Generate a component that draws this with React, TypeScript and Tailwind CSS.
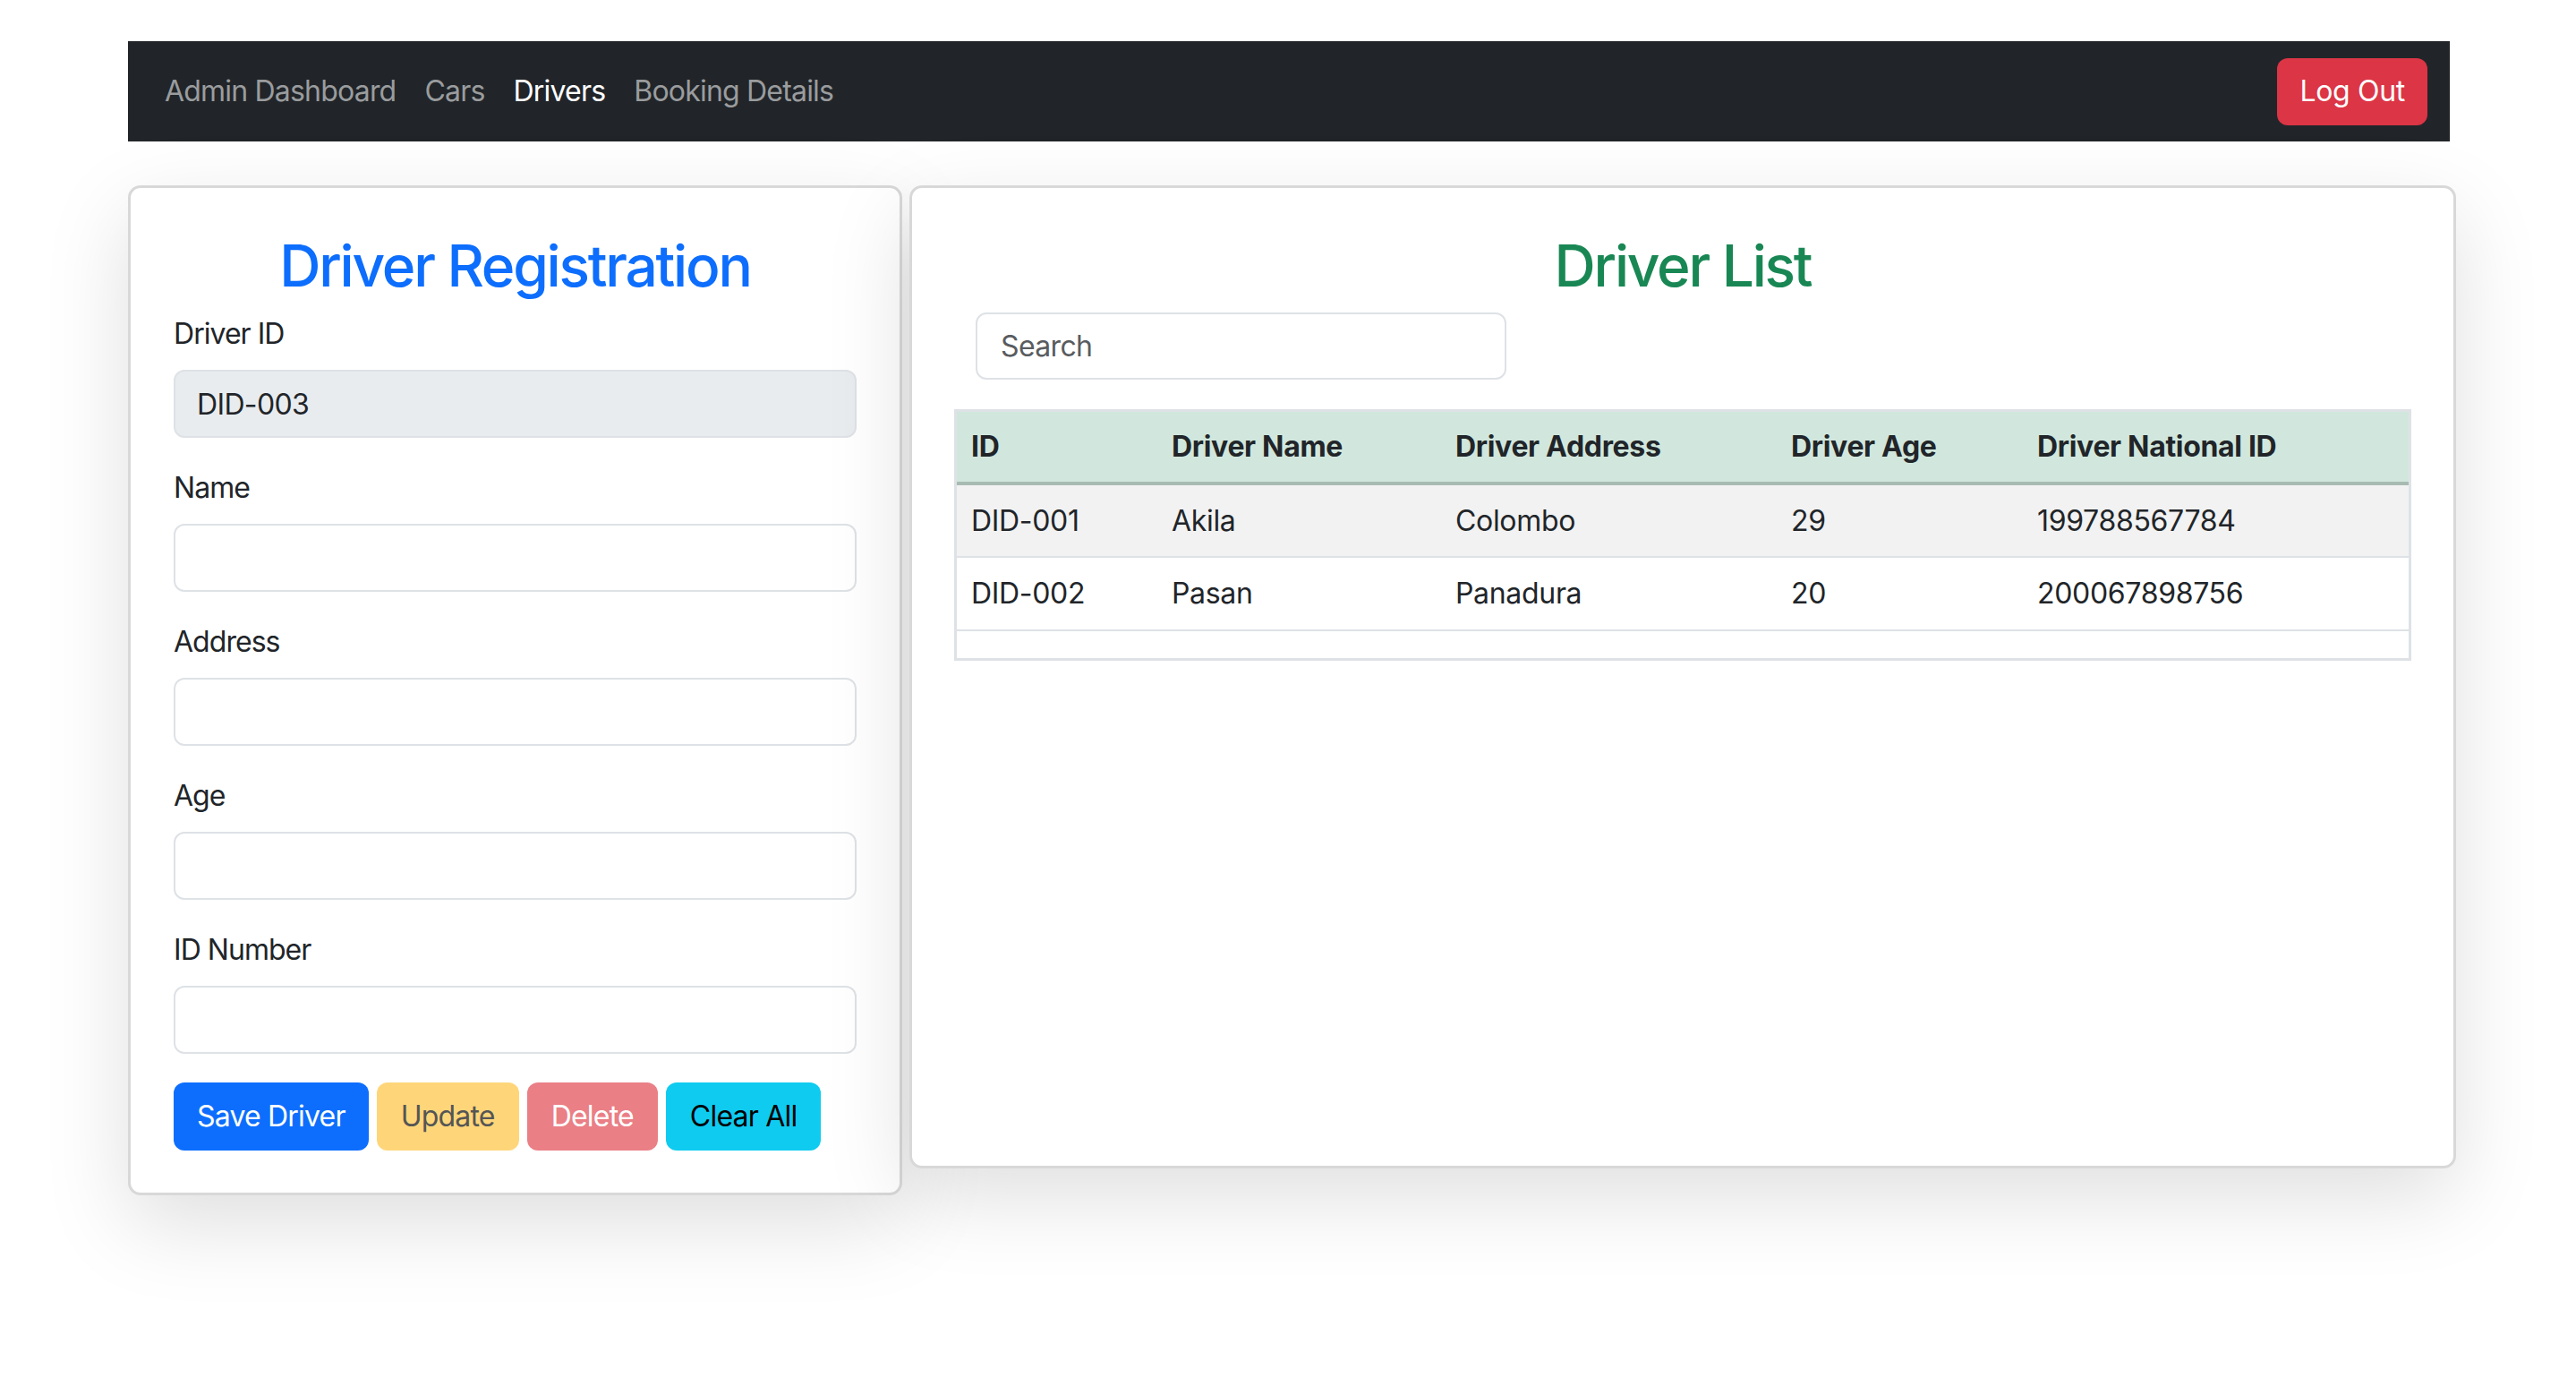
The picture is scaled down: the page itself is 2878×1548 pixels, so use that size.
import React from "react";

const navLinks = [
  { label: "Admin Dashboard", active: false },
  { label: "Cars", active: false },
  { label: "Drivers", active: true },
  { label: "Booking Details", active: false },
];

const fields = ["Name", "Address", "Age", "ID Number"];

const drivers = [
  { id: "DID-001", name: "Akila", address: "Colombo", age: "29", nic: "199788567784" },
  { id: "DID-002", name: "Pasan", address: "Panadura", age: "20", nic: "200067898756" },
];

function NavBar() {
  return (
    <header className="flex h-[112px] w-[2594px] items-center justify-between bg-[#212529] pl-[41px] pr-[25px]">
      <nav className="flex items-center gap-[32px] text-[32px] tracking-[-0.025em]">
        {navLinks.map((link) => (
          <a
            key={link.label}
            href="#"
            className={link.active ? "text-white" : "text-[#9a9c9e]"}
          >
            {link.label}
          </a>
        ))}
      </nav>
      <button className="h-[75px] rounded-[12px] bg-[#dc3545] px-[25px] text-[32px] text-white">
        Log Out
      </button>
    </header>
  );
}

function Field({ label, value, disabled }: { label: string; value?: string; disabled?: boolean }) {
  return (
    <div className="mb-[32px]">
      <label className="mb-[16px] block text-[32px] leading-[48px] tracking-[-0.03em] text-[#212529]">{label}</label>
      <input
        readOnly
        value={value ?? ""}
        className={`block h-[76px] w-full rounded-[12px] border-2 border-[#dee2e6] px-[24px] text-[32px] tracking-[-0.02em] text-[#212529] outline-none ${
          disabled ? "bg-[#e9ecef]" : "bg-white"
        }`}
      />
    </div>
  );
}

function RegistrationCard() {
  return (
    <section className="w-[865px] rounded-[14px] border-[3px] border-[#d8d8d8] bg-white px-[48px] pb-[47px] pt-[48px] shadow-[0_32px_96px_rgba(0,0,0,0.13)]">
      <h2 className="mb-[14px] text-center text-[64px] font-medium leading-[77px] tracking-[-0.035em] text-[#0d6efd]">
        Driver Registration
      </h2>
      <Field label="Driver ID" value="DID-003" disabled />
      {fields.map((f) => (
        <Field key={f} label={f} />
      ))}
      <div className="flex gap-[9px] text-[32px] tracking-[-0.025em]">
        <button className="h-[76px] rounded-[12px] bg-[#0d6efd] px-[26px] text-white">Save Driver</button>
        <button className="h-[76px] rounded-[12px] bg-[#fed679] px-[27px] text-[#555555]">Update</button>
        <button className="h-[76px] rounded-[12px] bg-[#ea7f86] px-[27px] text-white">Delete</button>
        <button className="h-[76px] rounded-[12px] bg-[#0fcbf0] px-[27px] text-black">Clear All</button>
      </div>
    </section>
  );
}

function DriverListCard() {
  return (
    <section className="h-[1098px] w-[1728px] rounded-[14px] border-[3px] border-[#d8d8d8] bg-white px-[47px] pt-[48px] shadow-[0_32px_96px_rgba(0,0,0,0.13)]">
      <h2 className="mb-[14px] text-center text-[64px] font-medium leading-[77px] tracking-[-0.035em] text-[#198754]">
        Driver List
      </h2>
      <input
        placeholder="Search"
        className="mb-[33px] ml-[24px] block h-[75px] w-[593px] rounded-[12px] border-2 border-[#dee2e6] px-[26px] text-[32px] tracking-[-0.02em] text-[#212529] outline-none placeholder:text-[#595c5f]"
      />
      <div className="border-[3px] border-[#dee2e6] text-[32px] text-[#212529]">
        <table className="w-full table-fixed border-collapse">
          <colgroup>
            <col className="w-[224px]" />
            <col className="w-[317px]" />
            <col className="w-[375px]" />
            <col className="w-[275px]" />
            <col />
          </colgroup>
          <thead>
            <tr className="h-[80px] border-b-4 border-[#a8bbb2] bg-[#d1e7dd] text-left">
              <th className="px-[16px] font-bold">ID</th>
              <th className="px-[16px] font-bold">Driver Name</th>
              <th className="px-[16px] font-bold">Driver Address</th>
              <th className="px-[16px] font-bold">Driver Age</th>
              <th className="px-[16px] font-bold">Driver National ID</th>
            </tr>
          </thead>
          <tbody>
            {drivers.map((d, i) => (
              <tr
                key={d.id}
                className={`h-[82px] border-b-2 border-[#dee2e6] ${i % 2 === 0 ? "bg-[#f2f2f2]" : "bg-white"}`}
              >
                <td className="px-[16px]">{d.id}</td>
                <td className="px-[16px]">{d.name}</td>
                <td className="px-[16px]">{d.address}</td>
                <td className="px-[16px]">{d.age}</td>
                <td className="px-[16px]">{d.nic}</td>
              </tr>
            ))}
          </tbody>
        </table>
        <div className="h-[30px]" />
      </div>
    </section>
  );
}

export default function App() {
  return (
    <div className="min-h-screen bg-white font-['Inter','Noto_Sans',sans-serif] tracking-[-0.02em]">
      <div className="ml-[143px] pt-[46px]">
        <NavBar />
        <div className="mt-[49px] flex items-start gap-[8px]">
          <RegistrationCard />
          <DriverListCard />
        </div>
      </div>
    </div>
  );
}
